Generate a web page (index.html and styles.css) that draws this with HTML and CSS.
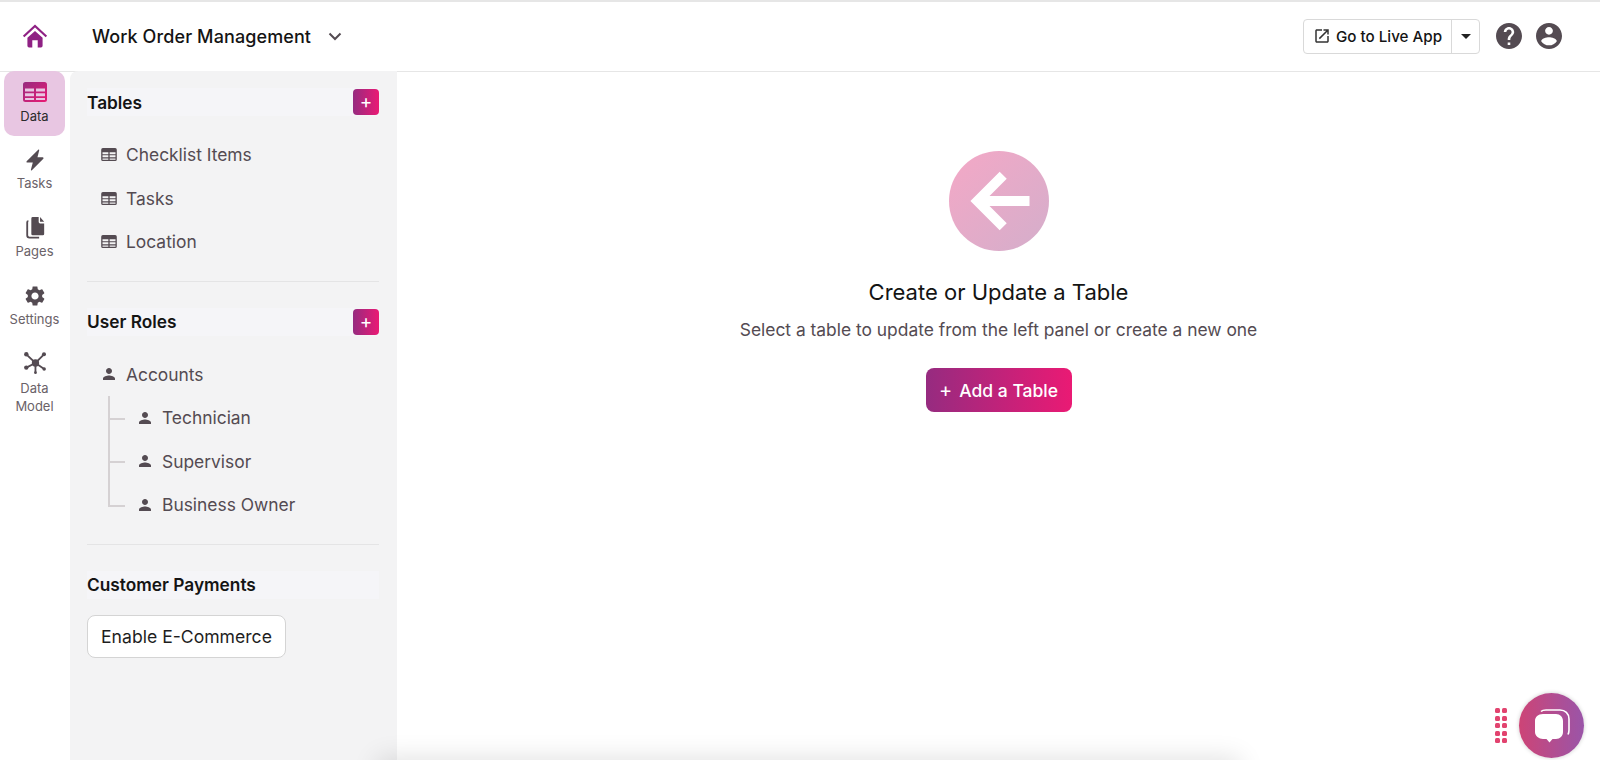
FILE: index.html
```html
<!DOCTYPE html>
<html lang="en">
<head>
    <meta charset="UTF-8">
    <meta name="viewport" content="width=device-width, initial-scale=1.0">
    <title>Work Order Management</title>
    <link rel="stylesheet" href="styles.css">
</head>
<body>
    <svg class="sprite" width="0" height="0">
        <defs>
            <linearGradient id="brand" x1="0" y1="0" x2="1" y2="1">
                <stop offset="0" stop-color="#962b80"/>
                <stop offset="1" stop-color="#ea1a74"/>
            </linearGradient>
        </defs>
        <symbol id="i-table" viewBox="0 0 24 20">
            <path fill-rule="evenodd" d="M2.500 0h19A2.500 2.500 0 0 1 24 2.500v15a2.500 2.500 0 0 1-2.500 2.500h-19A2.500 2.500 0 0 1 0 17.500v-15A2.500 2.500 0 0 1 2.500 0zM2 6.500v3h9v-3zm11 0v3h9v-3zM2 11.300v3h9v-3zm11 0v3h9v-3zM2 16v2h9v-2zm11 0v2h9v-2z"/>
        </symbol>
        <symbol id="i-person" viewBox="0 0 24 24">
            <path d="M12 12c2.210 0 4-1.790 4-4s-1.790-4-4-4-4 1.790-4 4 1.790 4 4 4zm0 2c-2.670 0-8 1.340-8 4v2h16v-2c0-2.660-5.330-4-8-4z"/>
        </symbol>
    </svg>

    <header class="topbar">
        <a class="home-link" href="#">
            <svg class="home-icon" viewBox="0 0 24 24"><path d="M5 13.500 12 7.300l7 6.200V21a1.500 1.500 0 0 1-1.500 1.500H14.500V16h-5v6.500H6.500A1.500 1.500 0 0 1 5 21z"/><path class="home-roof" d="M1.500 12.500 12 2.800l10.500 9.700"/></svg>
        </a>
        <div class="app-title">Work Order Management</div>
        <svg class="title-chevron" viewBox="0 0 14 9"><path d="M1.500 1.500 7 7l5.500-5.500"/></svg>
        <div class="topbar-right">
            <div class="live-group">
                <a class="live-btn" href="#">
                    <svg class="live-icon" viewBox="0 0 24 24"><path d="M19 19H5V5h7V3H5c-1.110 0-2 .9-2 2v14c0 1.100.89 2 2 2h14c1.100 0 2-.9 2-2v-7h-2v7zM14 3v2h3.590l-9.830 9.830 1.410 1.410L19 6.410V10h2V3h-7z"/></svg>
                    Go to Live App
                </a>
                <a class="live-caret" href="#"><span class="caret"></span></a>
            </div>
            <svg class="round-icon" viewBox="2 2 20 20"><path d="M12 2C6.480 2 2 6.480 2 12s4.480 10 10 10 10-4.480 10-10S17.520 2 12 2zm1 17h-2v-2h2v2zm2.070-7.750-.9.920C13.450 12.900 13 13.500 13 15h-2v-.5c0-1.100.45-2.100 1.170-2.830l1.240-1.260c.37-.36.59-.86.59-1.410 0-1.100-.9-2-2-2s-2 .9-2 2H8c0-2.210 1.790-4 4-4s4 1.790 4 4c0 .88-.36 1.680-.93 2.250z"/></svg>
            <svg class="round-icon" viewBox="2 2 20 20"><path d="M12 2C6.480 2 2 6.480 2 12s4.480 10 10 10 10-4.480 10-10S17.520 2 12 2zm0 3c1.660 0 3 1.340 3 3s-1.340 3-3 3-3-1.340-3-3 1.340-3 3-3zm0 14.200c-2.500 0-4.710-1.280-6-3.220.03-1.990 4-3.080 6-3.080 1.990 0 5.970 1.090 6 3.080-1.290 1.940-3.500 3.220-6 3.220z"/></svg>
        </div>
    </header>

    <div class="layout">
        <nav class="rail">
            <a class="rail-item active" href="#">
                <svg class="rail-icon data-icon" viewBox="0 0 24 20"><use href="#i-table"/></svg>
                <span>Data</span>
            </a>
            <a class="rail-item" href="#">
                <svg class="rail-icon" viewBox="0 0 20 24"><path d="M13.500.8c.5-.6 1.300-.1 1.100.6L12.700 9h5.700c.8 0 1.200.9.7 1.500L6.600 23.300c-.5.500-1.300.1-1.100-.6L7.600 14.800H1.600c-.8 0-1.200-.9-.7-1.500z"/></svg>
                <span>Tasks</span>
            </a>
            <a class="rail-item" href="#">
                <svg class="rail-icon" viewBox="0 0 20 24"><path d="M7.500 0h6.500v5.500A1.500 1.500 0 0 0 15.500 7H20v11.500a1.500 1.500 0 0 1-1.500 1.500h-11A1.500 1.500 0 0 1 6 18.500v-17A1.500 1.500 0 0 1 7.500 0zM15.500 0 20 5.200h-4.500z"/><path class="pages-back" d="M2.800 4.500h-.1A1.200 1.200 0 0 0 1.500 5.700V20a2.500 2.500 0 0 0 2.500 2.500h10.500"/></svg>
                <span>Pages</span>
            </a>
            <a class="rail-item" href="#">
                <svg class="rail-icon settings-icon" viewBox="2 2 20 20"><path d="M19.140 12.940c.04-.3.06-.61.06-.94 0-.32-.02-.64-.07-.94l2.030-1.580c.18-.14.23-.41.12-.61l-1.920-3.320c-.12-.22-.37-.29-.59-.22l-2.390.96c-.5-.38-1.030-.7-1.620-.94l-.36-2.540c-.04-.24-.24-.41-.48-.41h-3.840c-.24 0-.43.17-.47.41l-.36 2.540c-.59.24-1.130.57-1.620.94l-2.390-.96c-.22-.08-.47 0-.59.22L2.740 8.870c-.12.21-.08.47.12.61l2.030 1.580c-.05.3-.09.63-.09.94s.02.64.07.94l-2.030 1.580c-.18.14-.23.41-.12.61l1.920 3.320c.12.22.37.29.59.22l2.390-.96c.5.38 1.030.7 1.620.94l.36 2.540c.05.24.24.41.48.41h3.840c.24 0 .44-.17.47-.41l.36-2.540c.59-.24 1.130-.56 1.620-.94l2.390.96c.22.08.47 0 .59-.22l1.920-3.320c.12-.22.07-.47-.12-.61l-2.010-1.580zM12 15.600c-1.980 0-3.600-1.620-3.600-3.600s1.620-3.600 3.600-3.600 3.600 1.620 3.600 3.600-1.620 3.600-3.600 3.600z"/></svg>
                <span>Settings</span>
            </a>
            <a class="rail-item model-item" href="#">
                <svg class="rail-icon model-icon" viewBox="0 0 24 24"><circle cx="12.500" cy="12" r="4"/><circle cx="2.500" cy="2.500" r="2.400"/><circle cx="21.800" cy="2.500" r="2.200"/><circle cx="2.500" cy="17" r="2.400"/><circle cx="22" cy="18.500" r="1.900"/><circle cx="12.500" cy="22.500" r="1.500"/><path class="net-lines" d="M2.500 2.500l10 9.500 9.300-9.500M2.500 17l10-5 9.500 6.500M12.500 12v10.500"/></svg>
                <span>Data<br>Model</span>
            </a>
        </nav>

        <aside class="panel">
            <section class="panel-section">
                <div class="section-head">
                    <h3>Tables</h3>
                    <button class="add-small">+</button>
                </div>
                <ul class="item-list">
                    <li><svg class="table-icon"><use href="#i-table"/></svg>Checklist Items</li>
                    <li><svg class="table-icon"><use href="#i-table"/></svg>Tasks</li>
                    <li><svg class="table-icon"><use href="#i-table"/></svg>Location</li>
                </ul>
            </section>
            <section class="panel-section">
                <div class="section-head">
                    <h3>User Roles</h3>
                    <button class="add-small">+</button>
                </div>
                <ul class="item-list">
                    <li><svg class="person-icon"><use href="#i-person"/></svg>Accounts</li>
                </ul>
                <ul class="item-list role-tree">
                    <li><svg class="person-icon"><use href="#i-person"/></svg>Technician</li>
                    <li><svg class="person-icon"><use href="#i-person"/></svg>Supervisor</li>
                    <li><svg class="person-icon"><use href="#i-person"/></svg>Business Owner</li>
                </ul>
            </section>
            <section class="panel-section last">
                <div class="section-head plain">
                    <h3>Customer Payments</h3>
                </div>
                <button class="ecommerce-btn">Enable E-Commerce</button>
            </section>
        </aside>

        <main class="main">
            <div class="empty-circle">
                <svg class="arrow-icon" viewBox="0 0 100 100"><path d="M80.500 50H35M54.200 24.300 28.500 50l25.700 25.700"/></svg>
            </div>
            <h2>Create or Update a Table</h2>
            <p>Select a table to update from the left panel or create a new one</p>
            <button class="add-table"><span class="plus">+</span>Add a Table</button>
            <div class="bottom-shadow"></div>
        </main>
    </div>

    <div class="chat-widget">
        <div class="grip">
            <i></i><i></i><i></i><i></i><i></i><i></i><i></i><i></i><i></i><i></i>
        </div>
        <div class="chat-btn">
            <svg viewBox="0 0 40 40"><path class="chat-back" d="M9 5.500C10 4.500 12 4 14 4h14c5 0 9 3.500 9 9v11c0 2-.5 3.500-1 4.500"/><path d="M11 8h13c4 0 7 3 7 7v11c0 4-3 7-7 7h-3.500l-3 3.500-3-3.500H11c-4 0-8-3-8-7V15c0-4 3-7 8-7z"/></svg>
        </div>
    </div>
</body>
</html>
```

FILE: styles.css
```css
* {
    box-sizing: border-box;
}
html, body {
    height: 100%;
}
body {
    font-family: 'Inter', 'Liberation Sans', sans-serif;
    background-color: #ffffff;
    margin: 0;
    color: #544b52;
    overflow: hidden;
}
a {
    color: inherit;
    text-decoration: none;
}
.sprite {
    position: absolute;
}

/* top bar */
.topbar {
    height: 72px;
    display: flex;
    align-items: center;
    border-top: 2px solid #e6e6e6;
    border-bottom: 1px solid #e6e6e6;
    padding: 0 41px 1px 0;
}
.home-link {
    width: 70px;
    display: flex;
    justify-content: center;
}
.home-icon {
    width: 26px;
    height: 26px;
    fill: #8f2184;
}
.home-roof {
    fill: none;
    stroke: #8f2184;
    stroke-width: 2;
}
.app-title {
    margin-left: 22px;
    font-size: 18px;
    font-weight: 500;
    letter-spacing: 0.1px;
    color: #141414;
}
.title-chevron {
    width: 14px;
    height: 9px;
    margin-left: 17px;
    fill: none;
    stroke: #544b52;
    stroke-width: 2;
}
.topbar-right {
    margin-left: auto;
    display: flex;
    align-items: center;
    gap: 17px;
}
.live-group {
    display: flex;
    height: 35px;
    margin-right: -1px;
    border: 1px solid #d9d9d9;
    border-radius: 4px;
}
.live-btn {
    width: 148px;
    display: flex;
    align-items: center;
    justify-content: center;
    gap: 5px;
    font-size: 15.200px;
    font-weight: 500;
    color: #141414;
    border-right: 1px solid #d9d9d9;
}
.live-icon {
    width: 18px;
    height: 18px;
    fill: #333333;
}
.live-caret {
    width: 27px;
    display: flex;
    align-items: center;
    justify-content: center;
}
.caret {
    border-left: 5px solid transparent;
    border-right: 5px solid transparent;
    border-top: 5px solid #222222;
}
.round-icon {
    width: 26px;
    height: 26px;
    fill: #544b52;
    margin-right: -3px;
}

.layout {
    display: flex;
    height: calc(100% - 72px);
}

/* left rail */
.rail {
    width: 70px;
    flex: none;
    margin-top: -1px;
    display: flex;
    flex-direction: column;
}
.rail-item {
    height: 68px;
    flex: none;
    margin: 0 5px 0 4px;
    padding-top: 13px;
    display: flex;
    flex-direction: column;
    align-items: center;
    gap: 3px;
    font-size: 13px;
    line-height: 18px;
    text-align: center;
    color: #6a6268;
}
.rail-item.active {
    height: 65px;
    padding-top: 11px;
    background-color: #e8c6e2;
    border-radius: 10px;
    color: #2b2b2b;
}
.rail-item.model-item {
    padding-top: 12px;
    gap: 5px;
}
.rail-icon {
    width: 22px;
    height: 22px;
    fill: #544b52;
}
.data-icon {
    height: 20px;
    width: 24px;
    margin-bottom: 2px;
    fill: url(#brand);
}
.settings-icon {
    width: 20px;
    height: 20px;
    margin: 1px 0;
}
.model-icon {
    overflow: visible;
}
.pages-back {
    fill: none;
    stroke: #544b52;
    stroke-width: 2;
}
.net-lines {
    fill: none;
    stroke: #544b52;
    stroke-width: 2;
}

/* side panel */
.panel {
    width: 327px;
    flex: none;
    margin-top: -1px;
    padding: 17px 18px 0 17px;
    background-color: #f3f3f4;
    border-top-left-radius: 8px;
}
.panel-section {
    padding-bottom: 17px;
    margin-bottom: 26px;
    border-bottom: 1px solid #e4e4e5;
}
.panel-section.last {
    border-bottom: none;
    margin-bottom: 0;
}
.section-head {
    height: 28px;
    display: flex;
    align-items: center;
    justify-content: space-between;
    background-color: #f5f5f8;
}
.section-head h3 {
    margin: 0;
    font-size: 17.300px;
    font-weight: 600;
    color: #141414;
}
.add-small {
    width: 26px;
    height: 26px;
    padding: 0;
    border: none;
    border-radius: 4px;
    background: linear-gradient(90deg, #962b80, #ea1a74);
    color: #ffffff;
    font-family: inherit;
    font-size: 19px;
    line-height: 24px;
}
.item-list {
    list-style: none;
    margin: 0;
    padding: 17px 0 0 14px;
}
.item-list li {
    height: 43.500px;
    display: flex;
    align-items: center;
    font-size: 17.400px;
    color: #544b52;
}
.table-icon {
    width: 16px;
    height: 13px;
    margin-right: 9px;
    fill: #544b52;
}
.person-icon {
    width: 18px;
    height: 18px;
    margin: 0 8px 0 -1px;
    fill: #544b52;
}
.role-tree {
    position: relative;
    padding: 0 0 0 50px;
}
.role-tree::before {
    content: "";
    position: absolute;
    left: 21px;
    top: 0;
    bottom: 20px;
    width: 2px;
    background-color: #d5d1d3;
}
.role-tree li {
    position: relative;
}
.role-tree li::before {
    content: "";
    position: absolute;
    left: -28px;
    top: 50%;
    width: 16px;
    height: 2px;
    background-color: #d5d1d3;
}
.ecommerce-btn {
    display: block;
    margin-top: 16px;
    width: 199px;
    height: 43px;
    padding: 0;
    border: 1px solid #d4d4d4;
    border-radius: 8px;
    background-color: #ffffff;
    font-family: inherit;
    font-size: 17.600px;
    color: #1e1e1e;
}

/* main area */
.main {
    flex: 1;
    position: relative;
    padding-top: 79px;
    display: flex;
    flex-direction: column;
    align-items: center;
}
.empty-circle {
    width: 100px;
    height: 100px;
    flex: none;
    border-radius: 50%;
    background: linear-gradient(135deg, #f4a8c6, #d4aecb);
}
.arrow-icon {
    display: block;
    width: 100px;
    height: 100px;
    fill: none;
    stroke: #ffffff;
    stroke-width: 10;
}
.main h2 {
    margin: 28px 0 0;
    font-size: 22px;
    font-weight: 400;
    color: #141414;
}
.main p {
    margin: 14px 0 0;
    font-size: 17.400px;
    color: #544b52;
}
.add-table {
    margin-top: 28px;
    width: 146px;
    height: 44px;
    flex: none;
    padding: 0;
    border: none;
    border-radius: 8px;
    background: linear-gradient(90deg, #962b80, #ea1a74);
    color: #ffffff;
    font-family: inherit;
    font-size: 17.500px;
    font-weight: 500;
}
.plus {
    margin-right: 7px;
    font-size: 20px;
    font-weight: 400;
}
.bottom-shadow {
    position: absolute;
    left: -20px;
    right: 360px;
    bottom: -30px;
    height: 30px;
    box-shadow: 0 -2px 26px rgba(0, 0, 0, 0.12);
}

/* chat widget, floats over the page */
.chat-widget {
    position: fixed;
    right: 16px;
    bottom: 2px;
    display: flex;
    align-items: center;
    gap: 12px;
}
.grip {
    display: grid;
    grid-template-columns: 5px 5px;
    gap: 2.500px 2px;
}
.grip i {
    width: 5px;
    height: 5px;
    border-radius: 1.500px;
    background-color: #e2436f;
}
.chat-btn {
    width: 65px;
    height: 65px;
    border-radius: 50%;
    background: linear-gradient(90deg, #cd4476, #9a55a8);
    box-shadow: 0 0 4px rgba(0, 0, 0, 0.2);
    display: flex;
    align-items: center;
    justify-content: center;
}
.chat-btn svg {
    width: 40px;
    height: 40px;
    fill: #ffffff;
}
.chat-back {
    fill: none;
    stroke: #ffffff;
    stroke-width: 1.600;
}
```
